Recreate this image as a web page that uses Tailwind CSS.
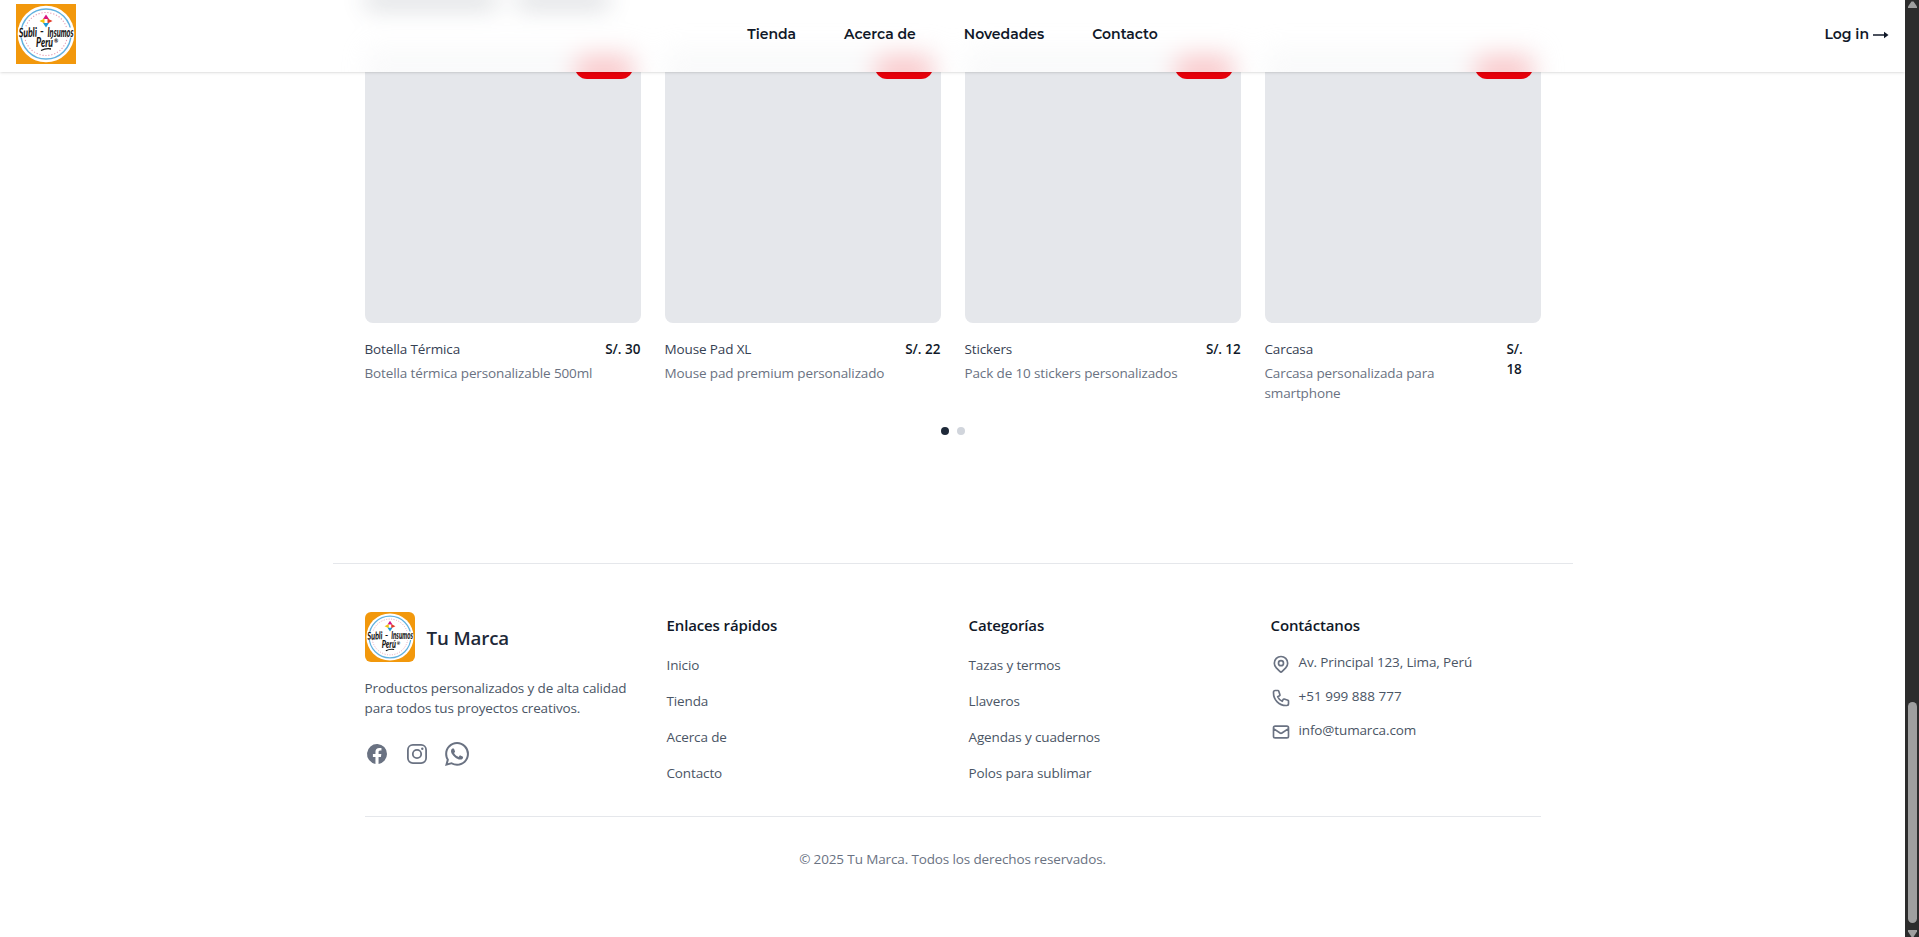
<!DOCTYPE html>
<html lang="es">
<head>
<meta charset="utf-8">
<title>Tu Marca</title>
<script src="https://cdn.jsdelivr.net/npm/@tailwindcss/browser@4"></script>
</head>
<body class="h-[937px] w-[1919px] overflow-hidden bg-white font-['Segoe_UI','Open_Sans',sans-serif] text-[13.5px] leading-5 tracking-[-0.13px] text-gray-600">
<svg class="hidden">
  <symbol id="logo" viewBox="0 0 60 60">
    <rect width="60" height="60" fill="#f2980c"/>
    <circle cx="30" cy="30" r="28.3" fill="#fff"/>
    <circle cx="30" cy="30" r="25" fill="none" stroke="#62b1df" stroke-width="1.5"/>
    <circle cx="30" cy="30" r="21.5" fill="none" stroke="#e59bb4" stroke-width="1.1" stroke-dasharray="1.2 1.8"/>
    <path d="M2.500 23.500h55v10h-55z" fill="#fff"/>
    <path d="M30 10.500l3 4.500h-6z" fill="#d91483"/>
    <path d="M36.500 17l-5-2.500v5z" fill="#e23a28"/>
    <path d="M23.500 17l5-2.500v5z" fill="#f1c40f"/>
    <path d="M27 19h6l-3 4.500z" fill="#1b9ad6"/>
    <g font-family="Lato" font-style="italic" font-weight="900" letter-spacing="0" fill="#151515">
      <text x="3" y="33" font-size="13" textLength="18" lengthAdjust="spacingAndGlyphs" transform="rotate(-2 12 30)">Subli</text>
      <text x="24" y="31" font-size="11">-</text>
      <text x="31.500" y="32.500" font-size="13" textLength="26" lengthAdjust="spacingAndGlyphs">Insumos</text>
      <text x="20" y="43" font-size="13" textLength="17" lengthAdjust="spacingAndGlyphs">Perú</text>
      <text x="38" y="39" font-size="5">®</text>
    </g>
    <path d="M25 46.500q5-2.500 10-1.500" fill="none" stroke="#151515" stroke-width="1.300"/>
  </symbol>
</svg>

<div class="flex h-[937px]">
  <div class="relative h-full w-[1905px] shrink-0 overflow-hidden">
    <header class="absolute inset-x-0 top-0 z-10 grid h-[72px] grid-cols-[1fr_auto_1fr] items-center bg-white px-4 pb-1 font-['Montserrat','Inter',sans-serif] text-sm font-semibold tracking-normal text-[#101828] shadow-sm">
      <!-- frosted glass: soft shapes of the content that scrolls beneath the bar -->
      <div class="absolute inset-0 -z-10 overflow-hidden">
        <div class="mx-auto -mt-2 w-[1240px] px-8 opacity-20 blur-[12px]">
          <div class="flex h-[55px] gap-5">
            <div class="h-4 w-[132px] bg-gray-700"></div>
            <div class="h-4 w-[92px] bg-gray-700"></div>
          </div>
          <div class="grid grid-cols-4 gap-6">
            <div class="flex h-[50px] justify-end bg-gray-200 pt-2 pr-2"><div class="h-[34px] w-[58px] rounded-xl bg-[#e7000b]"></div></div>
            <div class="flex h-[50px] justify-end bg-gray-200 pt-2 pr-2"><div class="h-[34px] w-[58px] rounded-xl bg-[#e7000b]"></div></div>
            <div class="flex h-[50px] justify-end bg-gray-200 pt-2 pr-2"><div class="h-[34px] w-[58px] rounded-xl bg-[#e7000b]"></div></div>
            <div class="flex h-[50px] justify-end bg-gray-200 pt-2 pr-2"><div class="h-[34px] w-[58px] rounded-xl bg-[#e7000b]"></div></div>
          </div>
        </div>
      </div>
      <svg class="-mt-px size-[60px]"><use href="#logo"/></svg>
      <nav class="flex gap-12">
        <a>Tienda</a><a>Acerca de</a><a>Novedades</a><a>Contacto</a>
      </nav>
      <a class="flex items-center justify-end gap-1">Log in
        <svg class="mt-0.5 h-2 w-4" viewBox="0 0 16 8" fill="none" stroke="currentColor" stroke-width="1.500"><path d="M0 4h14"/><path d="M11 .800L15.500 4 11 7.200z" fill="currentColor" stroke="none"/></svg>
      </a>
    </header>

    <main class="mx-auto h-[563px] w-[1240px] px-8 pt-[47px]">
      <div class="grid grid-cols-4 gap-6">
        <article>
          <div class="flex h-[276px] items-start justify-end rounded-lg bg-gray-200 pt-2 pr-2"><div class="h-6 w-[58px] rounded-full bg-[#e7000b]"></div></div>
          <div class="mt-4 flex justify-between"><div><h3 class="text-gray-700">Botella Térmica</h3><p class="mt-1 whitespace-nowrap text-gray-500">Botella térmica personalizable 500ml</p></div><p class="whitespace-nowrap font-semibold tracking-normal text-gray-900">S/. 30</p></div>
        </article>
        <article>
          <div class="flex h-[276px] items-start justify-end rounded-lg bg-gray-200 pt-2 pr-2"><div class="h-6 w-[58px] rounded-full bg-[#e7000b]"></div></div>
          <div class="mt-4 flex justify-between"><div><h3 class="text-gray-700">Mouse Pad XL</h3><p class="mt-1 text-gray-500">Mouse pad premium personalizado</p></div><p class="font-semibold tracking-normal text-gray-900">S/. 22</p></div>
        </article>
        <article>
          <div class="flex h-[276px] items-start justify-end rounded-lg bg-gray-200 pt-2 pr-2"><div class="h-6 w-[58px] rounded-full bg-[#e7000b]"></div></div>
          <div class="mt-4 flex justify-between"><div><h3 class="text-gray-700">Stickers</h3><p class="mt-1 text-gray-500">Pack de 10 stickers personalizados</p></div><p class="font-semibold text-gray-900">S/. 12</p></div>
        </article>
        <article>
          <div class="flex h-[276px] items-start justify-end rounded-lg bg-gray-200 pt-2 pr-2"><div class="h-6 w-[58px] rounded-full bg-[#e7000b]"></div></div>
          <div class="mt-4 flex justify-between"><div><h3 class="text-gray-700">Carcasa</h3><p class="mt-1 text-gray-500">Carcasa personalizada para<br>smartphone</p></div><p class="w-[34px] font-semibold text-gray-900">S/.<br>18</p></div>
        </article>
      </div>
      <div class="mt-6 flex justify-center gap-2"><span class="size-2 rounded-full bg-gray-800"></span><span class="size-2 rounded-full bg-gray-300"></span></div>
    </main>

    <footer class="mx-auto w-[1240px] border-t border-gray-200 px-8 pt-12">
      <div class="grid h-[204px] grid-cols-4 gap-8">
        <section>
          <div class="flex items-center gap-3"><svg class="size-[50px] rounded-md"><use href="#logo"/></svg><h2 class="mt-0.5 text-[18.7px] font-semibold text-gray-800">Tu Marca</h2></div>
          <p class="mt-4 whitespace-nowrap">Productos personalizados y de alta calidad<br>para todos tus proyectos creativos.</p>
          <div class="mt-6 flex gap-4 text-gray-500">
            <svg class="size-6" viewBox="0 0 24 24" fill="currentColor"><path d="M22 12a10 10 0 1 0-11.560 9.880v-6.990H7.900V12h2.540V9.800c0-2.510 1.490-3.890 3.780-3.890 1.090 0 2.240.2 2.240.2v2.460h-1.260c-1.240 0-1.630.77-1.630 1.560V12h2.770l-.44 2.890h-2.330v6.990A10 10 0 0 0 22 12z"/></svg>
            <svg class="size-6" viewBox="0 0 24 24" fill="none" stroke="currentColor" stroke-width="1.800"><rect x="2.900" y="2.900" width="18.200" height="18.200" rx="5"/><circle cx="12" cy="12" r="4.200"/><circle cx="17.300" cy="6.700" r="1.200" fill="currentColor" stroke="none"/></svg>
            <svg class="size-6" viewBox="0 0 24 24" fill="currentColor"><path d="M17.472 14.382c-.297-.149-1.758-.867-2.030-.967-.273-.099-.471-.148-.67.150-.197.297-.767.966-.940 1.164-.173.199-.347.223-.644.075-.297-.150-1.255-.463-2.390-1.475-.883-.788-1.480-1.761-1.653-2.059-.173-.297-.018-.458.130-.606.134-.133.298-.347.446-.520.149-.174.198-.298.298-.497.099-.198.050-.371-.025-.520-.075-.149-.669-1.612-.916-2.207-.242-.579-.487-.500-.669-.510-.173-.008-.371-.010-.570-.010-.198 0-.520.074-.792.372-.272.297-1.040 1.016-1.040 2.479 0 1.462 1.065 2.875 1.213 3.074.149.198 2.096 3.200 5.077 4.487.709.306 1.262.489 1.694.625.712.227 1.360.195 1.871.118.571-.085 1.758-.719 2.006-1.413.248-.694.248-1.289.173-1.413-.074-.124-.272-.198-.570-.347m-5.421 7.403h-.004a9.870 9.870 0 0 1-5.031-1.378l-.361-.214-3.741.982.998-3.648-.235-.374a9.860 9.860 0 0 1-1.510-5.260c.001-5.450 4.436-9.884 9.888-9.884 2.640 0 5.122 1.030 6.988 2.898a9.825 9.825 0 0 1 2.893 6.994c-.003 5.450-4.437 9.884-9.885 9.884m8.413-18.297A11.815 11.815 0 0 0 12.050 0C5.495 0 .160 5.335.157 11.892c0 2.096.547 4.142 1.588 5.945L.057 24l6.305-1.654a11.882 11.882 0 0 0 5.683 1.448h.005c6.554 0 11.890-5.335 11.893-11.893a11.821 11.821 0 0 0-3.480-8.413z"/></svg>
          </div>
        </section>
        <section>
          <h3 class="mt-px text-[15px] leading-6 font-semibold text-gray-900">Enlaces rápidos</h3>
          <ul class="mt-[18px] space-y-4"><li>Inicio</li><li>Tienda</li><li>Acerca de</li><li>Contacto</li></ul>
        </section>
        <section>
          <h3 class="mt-px text-[15px] leading-6 font-semibold text-gray-900">Categorías</h3>
          <ul class="mt-[18px] space-y-4"><li>Tazas y termos</li><li>Llaveros</li><li>Agendas y cuadernos</li><li>Polos para sublimar</li></ul>
        </section>
        <section>
          <h3 class="mt-px text-[15px] leading-6 font-semibold text-gray-900">Contáctanos</h3>
          <ul class="mt-[15px] space-y-3">
            <li class="flex gap-2"><svg class="mt-0.5 size-5 text-gray-500" viewBox="0 0 24 24" fill="none" stroke="currentColor" stroke-width="2" stroke-linejoin="round"><path d="M17.657 16.657L13.414 20.900a2 2 0 0 1-2.827 0l-4.244-4.243a8 8 0 1 1 11.314 0z"/><circle cx="12" cy="11" r="3"/></svg><span>Av. Principal 123, Lima, Perú</span></li>
            <li class="flex gap-2"><svg class="mt-0.5 size-5 text-gray-500" viewBox="0 0 24 24" fill="none" stroke="currentColor" stroke-width="2" stroke-linejoin="round"><path d="M3 5a2 2 0 0 1 2-2h3.280a1 1 0 0 1 .948.684l1.498 4.493a1 1 0 0 1-.502 1.210l-2.257 1.130a11.042 11.042 0 0 0 5.516 5.516l1.130-2.257a1 1 0 0 1 1.210-.502l4.493 1.498a1 1 0 0 1 .684.949V19a2 2 0 0 1-2 2h-1C9.716 21 3 14.284 3 6V5z"/></svg><span class="tracking-normal">+51 999 888 777</span></li>
            <li class="flex gap-2"><svg class="mt-0.5 size-5 text-gray-500" viewBox="0 0 24 24" fill="none" stroke="currentColor" stroke-width="2" stroke-linejoin="round"><path d="M3 8l7.890 5.260a2 2 0 0 0 2.220 0L21 8M5 19h14a2 2 0 0 0 2-2V7a2 2 0 0 0-2-2H5a2 2 0 0 0-2 2v10a2 2 0 0 0 2 2z"/></svg><span>info@tumarca.com</span></li>
          </ul>
        </section>
      </div>
      <p class="border-t border-gray-200 pt-8 text-center text-gray-500">© 2025 Tu Marca. Todos los derechos reservados.</p>
    </footer>
  </div>
  <aside class="flex w-[14px] flex-col items-center bg-[#2c2c2c]">
    <svg class="mt-px h-[7px] w-[9px]" viewBox="0 0 9 7"><path d="M3.500.5h2L9 5.500V7H0V5.500z" fill="#9f9f9f"/></svg>
    <div class="mt-[694px] h-[221px] w-[9px] rounded-full bg-[#9f9f9f]"></div>
    <svg class="mt-[7px] h-[7px] w-[9px]" viewBox="0 0 9 7"><path d="M0 0h9v1.500L5.500 7h-2L0 1.500z" fill="#9f9f9f"/></svg>
  </aside>
</div>
</body>
</html>
